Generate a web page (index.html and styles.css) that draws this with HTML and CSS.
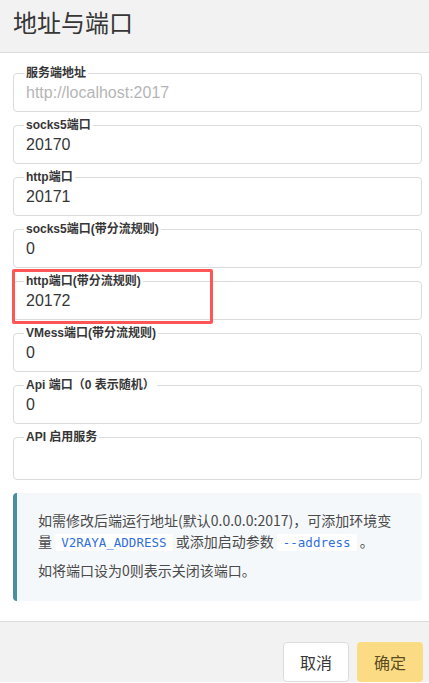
FILE: index.html
```html
<!DOCTYPE html>
<html lang="zh-CN">
<head>
    <meta charset="UTF-8">
    <meta name="viewport" content="width=device-width, initial-scale=1.0">
    <title>地址与端口</title>
    <link rel="stylesheet" href="styles.css">
</head>
<body>

<div class="modal-card">
    <!-- 标题 -->
    <header class="card-head">
        <p class="card-title">地址与端口</p>
    </header>

    <section class="card-body">
        <fieldset class="field">
            <legend>服务端地址</legend>
            <input type="text" placeholder="http://localhost:2017">
        </fieldset>
        <fieldset class="field">
            <legend>socks5端口</legend>
            <input type="text" value="20170">
        </fieldset>
        <fieldset class="field">
            <legend>http端口</legend>
            <input type="text" value="20171">
        </fieldset>
        <fieldset class="field">
            <legend>socks5端口(带分流规则)</legend>
            <input type="text" value="0">
        </fieldset>
        <fieldset class="field">
            <legend>http端口(带分流规则)</legend>
            <input type="text" value="20172">
        </fieldset>
        <fieldset class="field">
            <legend>VMess端口(带分流规则)</legend>
            <input type="text" value="0">
        </fieldset>
        <fieldset class="field">
            <legend>Api 端口（0 表示随机）</legend>
            <input type="text" value="0">
        </fieldset>
        <fieldset class="field">
            <legend>API 启用服务</legend>
            <div class="empty-value"></div>
        </fieldset>

        <!-- 提示信息 -->
        <article class="message">
            <p>如需修改后端运行地址(默认0.0.0.0:2017)，可添加环境变量 <code>V2RAYA_ADDRESS</code> 或添加启动参数 <code>--address</code> 。</p>
            <p>如将端口设为0则表示关闭该端口。</p>
        </article>

        <!-- 标注框 -->
        <div class="highlight"></div>
    </section>

    <footer class="card-foot">
        <button class="btn">取消</button>
        <button class="btn btn-primary">确定</button>
    </footer>
</div>

</body>
</html>
```

FILE: styles.css
```css
body {
    margin: 0;
    padding: 0;
    font-family: 'Liberation Sans', 'Noto Sans CJK SC', sans-serif;
    color: #363636;
    background: #fff;
}
.modal-card {
    width: 429px;
    height: 683px;
    overflow: hidden;
}
.card-head {
    background: #f2f2f2;
    border-bottom: 1px solid #dbdbdb;
    padding: 7px 13px 15px;
}
.card-title {
    margin: 0;
    font-size: 24px;
    line-height: 30px;
    font-family: 'Noto Sans CJK SC', sans-serif;
    font-weight: 400;
    color: #363636;
}
.card-body {
    position: relative;
    padding: 13px 7px 20px 13px;
}
.field {
    margin: 0 0 6px;
    padding: 1px 10px 6px;
    border: 1px solid #dbdbdb;
    border-radius: 4px;
    min-width: 0;
}
.field legend {
    padding: 0 2px;
    font-size: 12px;
    line-height: 14px;
    font-weight: 700;
    color: #363636;
}
.field input {
    display: block;
    width: 100%;
    box-sizing: border-box;
    height: 24px;
    padding: 0 2px;
    border: none;
    outline: none;
    background: transparent;
    font-family: 'Liberation Sans', sans-serif;
    font-size: 16px;
    color: #363636;
}
.field input::placeholder {
    color: #b5b5b5;
}
.empty-value {
    height: 28px;
}
.field:last-of-type {
    margin-bottom: 0;
}
.message {
    margin-top: 13px;
    background: #f5f8fa;
    border-left: 4px solid #4a8ea0;
    border-radius: 4px;
    padding: 17px 21px 20px;
    font-family: 'Noto Sans CJK SC', sans-serif;
    font-size: 14px;
    line-height: 21px;
    color: #4a4a4a;
}
.message p {
    margin: 0;
}
.message p + p {
    margin-top: 7px;
}
.message code {
    background: #fff;
    color: #2f6fdc;
    font-family: 'DejaVu Sans Mono', monospace;
    font-size: 12.5px;
    padding: 1px 6px;
}
.highlight {
    position: absolute;
    left: 12px;
    top: 216px;
    width: 195px;
    height: 49px;
    border: 3px solid #ff5555;
    border-radius: 2px;
}
.card-foot {
    background: #f2f2f2;
    border-top: 1px solid #dbdbdb;
    padding: 20px 6px 0 0;
    display: flex;
    justify-content: flex-end;
    gap: 8px;
}
.btn {
    height: 40px;
    padding: 0 16px;
    border: 1px solid #dbdbdb;
    border-radius: 4px;
    background: #fff;
    color: #363636;
    font-family: 'Noto Sans CJK SC', sans-serif;
    font-size: 16px;
    cursor: pointer;
}
.btn-primary {
    background: #fbdc85;
    border-color: transparent;
    color: #5c4d22;
}
```
